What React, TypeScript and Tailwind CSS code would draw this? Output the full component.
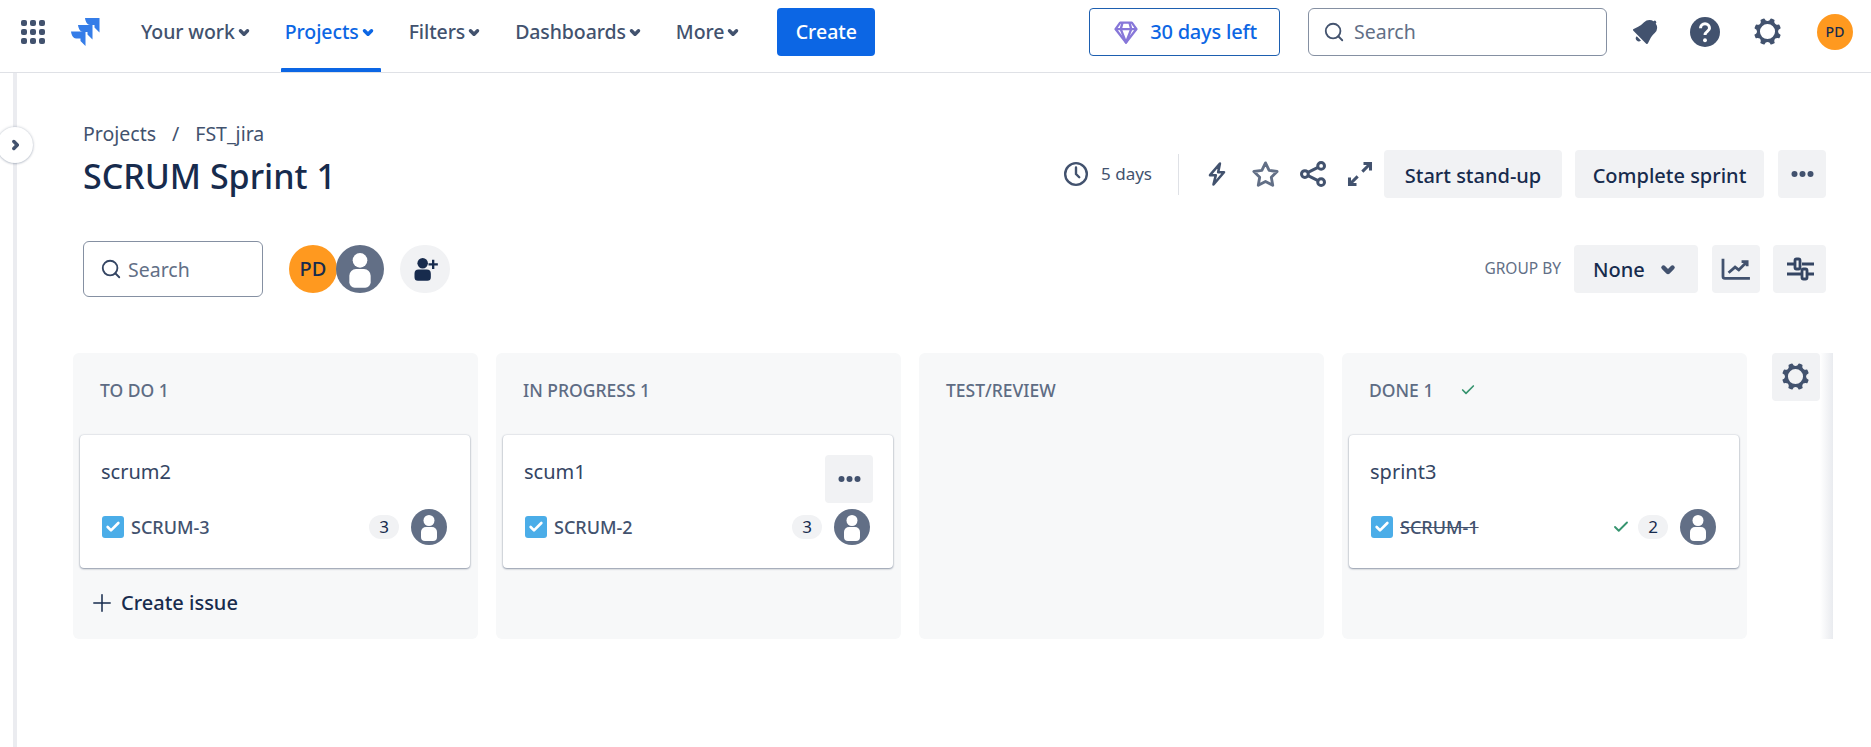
import { Plus, Search, Check } from "lucide-react";

const font = { fontFamily: '"Noto Sans", "Open Sans", sans-serif' };

function Chevron({ className }: { className?: string }) {
  return (
    <svg viewBox="0 0 24 24" className={className} fill="currentColor">
      <path
        stroke="currentColor"
        strokeWidth="1"
        d="M8.292 10.293a1.009 1.009 0 000 1.419l2.939 2.965c.218.215.5.322.779.322s.556-.107.769-.322l2.93-2.955a1.01 1.01 0 000-1.419.987.987 0 00-1.406 0l-2.298 2.317-2.307-2.327a.99.99 0 00-1.406 0z"
      />
    </svg>
  );
}

function Gear({ className }: { className?: string }) {
  return (
    <svg viewBox="0 0 24 24" className={className} fill="currentColor">
      <path
        fillRule="evenodd"
        d="M11.701 16.7a5.002 5.002 0 110-10.003 5.002 5.002 0 010 10.004m8.368-3.117a1.995 1.995 0 01-1.346-1.885c0-.876.563-1.613 1.345-1.885a.48.48 0 00.315-.574 8.947 8.947 0 00-.836-1.993.477.477 0 00-.598-.195 2.04 2.04 0 01-1.29.08 1.988 1.988 0 01-1.404-1.395 2.04 2.04 0 01.076-1.297.478.478 0 00-.196-.597 8.98 8.98 0 00-1.975-.826.479.479 0 00-.574.314 1.995 1.995 0 01-1.885 1.346 1.994 1.994 0 01-1.884-1.345.482.482 0 00-.575-.315c-.708.2-1.379.485-2.004.842a.47.47 0 00-.198.582A2.002 2.002 0 014.445 7.06a.478.478 0 00-.595.196 8.946 8.946 0 00-.833 1.994.48.48 0 00.308.572 1.995 1.995 0 011.323 1.877c0 .867-.552 1.599-1.324 1.877a.479.479 0 00-.308.57 8.99 8.99 0 00.723 1.79.477.477 0 00.624.194c.595-.273 1.343-.264 2.104.238.117.077.225.185.302.3.527.8.512 1.58.198 2.188a.473.473 0 00.168.628 8.946 8.946 0 002.11.897.474.474 0 00.57-.313 1.995 1.995 0 011.886-1.353c.878 0 1.618.567 1.887 1.353a.475.475 0 00.57.313 8.964 8.964 0 002.084-.883.473.473 0 00.167-.631c-.318-.608-.337-1.393.191-2.195.077-.116.185-.225.302-.302.772-.511 1.527-.513 2.125-.23a.477.477 0 00.628-.19 8.925 8.925 0 00.728-1.793.478.478 0 00-.314-.573"
      />
    </svg>
  );
}

function Dots({ className }: { className?: string }) {
  return (
    <svg viewBox="0 0 24 10" className={className} fill="currentColor">
      <circle cx="4" cy="5" r="3" />
      <circle cx="12" cy="5" r="3" />
      <circle cx="20" cy="5" r="3" />
    </svg>
  );
}

function PersonAvatar({ className }: { className?: string }) {
  return (
    <svg viewBox="0 0 36 36" className={className}>
      <circle cx="18" cy="18" r="18" fill="#626f86" />
      <circle cx="18" cy="11.500" r="5.500" fill="#fff" />
      <path d="M10 23a5 5 0 015-5h6a5 5 0 015 5v5a4 4 0 01-4 4h-8a4 4 0 01-4-4z" fill="#fff" />
    </svg>
  );
}

function Logo() {
  return (
    <svg viewBox="0 0 29 29" className="h-[29px] w-[29px]" fill="#357de8">
      <path d="M14 1h14.500v14.500l-5-5V8H19c-2.500 0-4.500-3-5-7z" />
      <path d="M7 8h14.500v14.500l-5-5V15H12c-2.500 0-4.500-3-5-7z" />
      <path d="M0 14.500h14.500V29l-5-5v-2.500H5c-2.500 0-4.500-3-5-7z" />
    </svg>
  );
}

function Grid() {
  return (
    <div className="grid h-6 w-6 grid-cols-3 gap-[3px]">
      {Array.from({ length: 9 }).map((_, i) => (
        <div key={i} className="rounded-[2px] bg-[#42526e]" />
      ))}
    </div>
  );
}

function NavItem({ label, active }: { label: string; active?: boolean }) {
  return (
    <div
      className={
        active
          ? "relative flex h-[72px] items-center px-1 pb-[9px] text-[#0c66e4]"
          : "relative flex h-[72px] items-center px-1 pb-[9px] text-[#42526e]"
      }
    >
      <span className="whitespace-nowrap text-[19.500px] font-medium tracking-[-0.1px]">{label}</span>
      <Chevron className="-mx-[5px] h-7 w-7" />
      {active && <div className="absolute bottom-0 left-0 right-0 h-1 rounded-t-[1px] bg-[#0c66e4]" />}
    </div>
  );
}

function Card({
  title,
  id,
  count,
  done,
  menu,
}: {
  title: string;
  id: string;
  count: number;
  done?: boolean;
  menu?: boolean;
}) {
  return (
    <div className="relative ml-[7px] flex h-[133px] w-[390px] flex-col rounded-[4px] bg-white pl-[21px] pr-[23px] pt-[25px] shadow-[0_1px_2px_#091e4266,0_0_2px_#091e4233]">
      <div className="h-6 text-[20px] leading-6 text-[#344563]">{title}</div>
      <div className="mt-[25px] flex h-9 items-center">
        <div className="ml-[1px] flex h-[22px] w-[22px] items-center justify-center rounded-[3px] bg-[#4bade8]">
          <Check className="h-4 w-4 text-white" strokeWidth={4} />
        </div>
        <span
          className={
            done
              ? "ml-[7px] text-[18px] font-medium text-[#42526e] line-through"
              : "ml-[7px] text-[18px] font-medium text-[#42526e]"
          }
        >
          {id}
        </span>
        {done && <Check className="ml-auto h-[18px] w-[18px] text-[#36946f]" strokeWidth={2.5} />}
        <span
          className={
            done
              ? "ml-[8px] flex h-6 w-[30px] items-center justify-center rounded-full bg-[#f1f2f4] text-[17px] text-[#172b4d]"
              : "ml-auto flex h-6 w-[30px] items-center justify-center rounded-full bg-[#f1f2f4] text-[17px] text-[#172b4d]"
          }
        >
          {count}
        </span>
        <PersonAvatar className="ml-3 h-9 w-9" />
      </div>
      {menu && (
        <div className="absolute right-[20px] top-5 flex h-12 w-12 items-center justify-center rounded-[4px] bg-[#f1f2f4] text-[#42526e]">
          <Dots className="h-[10px] w-[27px]" />
        </div>
      )}
    </div>
  );
}

function Column({
  title,
  doneMark,
  children,
}: {
  title: string;
  doneMark?: boolean;
  children?: React.ReactNode;
}) {
  return (
    <div className="h-[286px] w-[405px] shrink-0 rounded-[6px] bg-[#f7f8f9]">
      <div className="mb-2 flex h-[74px] items-center pl-[27px] text-[17.500px] font-medium text-[#5e6c84]">
        {title}
        {doneMark && <Check className="ml-[27px] h-4 w-4 text-[#36946f]" strokeWidth={2.5} />}
      </div>
      {children}
    </div>
  );
}

export default function App() {
  return (
    <div className="flex h-[747px] w-[1871px] flex-col overflow-hidden bg-white" style={font}>
      {/* TOP NAV */}
      <header className="flex h-[73px] shrink-0 items-center border-b border-[#dfe1e6] pb-[9px] pl-[21px] pr-[18px]">
        <Grid />
        <div className="ml-[26px]">
          <Logo />
        </div>
        <nav className="-mb-[9px] ml-[37px] flex h-[72px] gap-6">
          <NavItem label="Your work" />
          <NavItem label="Projects" active />
          <NavItem label="Filters" />
          <NavItem label="Dashboards" />
          <NavItem label="More" />
        </nav>
        <button className="ml-[31px] h-12 w-[98px] rounded-[4px] bg-[#0c66e4] text-[19.500px] font-medium text-white">
          Create
        </button>

        <div className="ml-auto flex h-12 w-[191px] items-center justify-center gap-[10px] rounded-[4px] border border-[#1d5fb0] text-[20px] font-medium text-[#0c66e4]">
          <svg viewBox="0 0 24 24" className="h-7 w-7" fill="none" stroke="#8777d9" strokeWidth="2" strokeLinejoin="round">
            <path d="M7 4h10l4 5.500L12 21 3 9.500z" />
            <path d="M3 9.500h18M9 4 7.500 9.500 12 21l4.500-11.500L15 4" />
          </svg>
          <span className="whitespace-nowrap tracking-[-0.2px]">30 days left</span>
        </div>
        <div className="ml-7 flex h-12 w-[299px] items-center rounded-[6px] border border-[#8590a2] pl-[14px] text-[19.500px] text-[#626f86]">
          <Search className="h-[22px] w-[22px] text-[#44546f]" strokeWidth={2} />
          <span className="ml-[9px]">Search</span>
        </div>
        <svg viewBox="0 0 24 24" className="ml-[20px] h-9 w-9 text-[#42526e]" fill="currentColor">
          <path d="M6.485 17.669a2 2 0 002.829 0l-2.829-2.83a2 2 0 000 2.83zm4.897-12.191l-.725.725c-.782.782-2.21 1.813-3.206 2.311l-3.017 1.509c-.495.248-.584.774-.187 1.171l8.556 8.556c.398.396.922.313 1.171-.188l1.51-3.016c.494-.988 1.526-2.42 2.311-3.206l.725-.726a5.048 5.048 0 00.64-6.356 1.01 1.01 0 10-1.354-1.494c-.023.025-.046.049-.066.075a5.043 5.043 0 00-2.788-.84 5.036 5.036 0 00-3.57 1.479z" />
        </svg>
        <svg viewBox="0 0 24 24" className="ml-[24px] h-9 w-9 text-[#42526e]">
          <circle cx="12" cy="12" r="10" fill="currentColor" />
          <circle cx="12" cy="17.500" r="1.300" fill="#fff" />
          <path d="M9 9.500a3 3 0 116 0c0 2-3 2.200-3 4.500" fill="none" stroke="#fff" strokeWidth="2" />
        </svg>
        <Gear className="ml-[27px] h-9 w-9 text-[#42526e]" />
        <div className="ml-[31px] flex h-9 w-9 items-center justify-center rounded-full bg-[#ff991f] text-[14px] font-medium text-[#172b4d]">
          PD
        </div>
      </header>

      <div className="relative flex flex-1">
        {/* SIDEBAR STRIP */}
        <div className="ml-[13px] w-1 shrink-0 bg-[#ebecf0]" />
        <div className="absolute -left-[3px] top-[54px] flex h-9 w-9 items-center justify-center rounded-full bg-white text-[#42526e] shadow-[0_0_3px_#091e4240,0_1px_2px_#091e4226]">
          <Chevron className="-rotate-90 h-7 w-7" />
        </div>

        <main className="flex flex-1 flex-col pl-[66px] pr-[45px] pt-[49px]">
          {/* BREADCRUMB */}
          <div className="flex h-6 items-center text-[19.500px] text-[#42526e]">
            <span>Projects</span>
            <span className="mx-[16px]">/</span>
            <span>FST_jira</span>
          </div>

          {/* TITLE ROW */}
          <div className="mt-1 flex h-12 items-center">
            <h1 className="pt-[4px] text-[34px] font-medium text-[#172b4d]">SCRUM Sprint 1</h1>
            <div className="ml-auto flex items-center text-[#42526e]">
              <svg viewBox="0 0 24 24" className="h-[26px] w-[26px]" fill="none" stroke="currentColor" strokeWidth="2.200">
                <circle cx="12" cy="12" r="10" />
                <path d="M12 6v6l3 3" strokeLinecap="round" />
              </svg>
              <span className="ml-[12px] text-[17px]">5 days</span>
              <div className="ml-[26px] h-[41px] w-px bg-[#dfe1e6]" />
              <svg viewBox="0 0 24 24" className="ml-[24px] h-[28px] w-[28px]" fill="none" stroke="currentColor" strokeWidth="2.200" strokeLinejoin="round">
                <path d="M14.500 3 6 13h5l-2 8 9-10.500h-5z" />
              </svg>
              <svg viewBox="0 0 24 24" className="ml-[19px] h-[31px] w-[31px]" fill="none" stroke="#626f86" strokeWidth="2.200" strokeLinejoin="round">
                <path d="m12 3 2.800 5.800 6.200.9-4.500 4.400 1.100 6.300-5.600-3-5.600 3 1.100-6.300L3 9.700l6.200-.9z" />
              </svg>
              <svg viewBox="0 0 24 24" className="ml-[17px] h-[30px] w-[30px]" fill="none" stroke="currentColor" strokeWidth="2.400">
                <circle cx="18.500" cy="5.500" r="2.700" />
                <circle cx="5.500" cy="12" r="2.700" />
                <circle cx="18.500" cy="18.500" r="2.700" />
                <path d="m8 10.700 8-4M8 13.300l8 4" />
              </svg>
              <svg viewBox="0 0 24 24" className="ml-[18px] h-7 w-7" fill="none" stroke="currentColor" strokeWidth="2.600">
                <path d="M14 10 21 3M15 3h6v6M10 14l-7 7M3 15v6h6" />
              </svg>
              <button className="ml-[10px] h-12 w-[178px] whitespace-nowrap rounded-[4px] bg-[#f1f2f4] pt-[4px] text-[20px] font-medium text-[#172b4d]">
                Start stand-up
              </button>
              <button className="ml-[13px] h-12 w-[189px] whitespace-nowrap rounded-[4px] bg-[#f1f2f4] pt-[4px] text-[20px] font-medium text-[#172b4d]">
                Complete sprint
              </button>
              <button className="ml-[14px] flex h-12 w-12 items-center justify-center rounded-[4px] bg-[#f1f2f4] text-[#42526e]">
                <Dots className="h-[10px] w-[27px]" />
              </button>
            </div>
          </div>

          {/* FILTER ROW */}
          <div className="mt-[47px] flex h-12 items-center">
            <div className="flex h-[56px] w-[180px] items-center rounded-[6px] border border-[#8590a2] pl-4 text-[19.500px] text-[#626f86]">
              <Search className="h-[22px] w-[22px] text-[#344563]" strokeWidth={2} />
              <span className="ml-[6px] pt-[2px]">Search</span>
            </div>
            <div className="ml-[26px] flex h-12 w-12 items-center justify-center rounded-full bg-[#ff991f] text-[20px] font-medium text-[#172b4d]">
              PD
            </div>
            <PersonAvatar className="-ml-px h-12 w-12" />
            <div className="ml-4 flex h-12 w-[50px] items-center justify-center rounded-full bg-[#f1f2f4]">
              <svg viewBox="0 0 24 24" className="h-7 w-7" fill="#172b4d">
                <circle cx="10" cy="7" r="4.500" />
                <path d="M3 16a3.500 3.500 0 013.500-3.500h7A3.500 3.500 0 0117 16v3a3 3 0 01-3 3H6a3 3 0 01-3-3z" />
                <path d="M18 4h2v3h3v2h-3v3h-2V9h-3V7h3z" />
              </svg>
            </div>
            <div className="ml-auto flex items-center">
              <span className="text-[15.500px] text-[#626f86]">GROUP BY</span>
              <div className="ml-[13px] flex h-12 w-[124px] items-center rounded-[4px] bg-[#f1f2f4] pl-[19px] text-[20px] font-medium text-[#172b4d]">
                <span className="pt-[2px]">None</span>
                <Chevron className="ml-[5px] h-9 w-9 text-[#42526e]" />
              </div>
              <div className="ml-[14px] flex h-12 w-12 items-center justify-center rounded-[4px] bg-[#f1f2f4] text-[#42526e]">
                <svg viewBox="0 0 32 28" className="h-[26px] w-[32px]" fill="none" stroke="currentColor" strokeWidth="3">
                  <path d="M2 3v19a2 2 0 002 2h27" />
                  <path d="m8 18 7-6 4 3 8-8M22 6h6v5" />
                </svg>
              </div>
              <div className="ml-[13px] flex h-12 w-[53px] items-center justify-center rounded-[4px] bg-[#f1f2f4] text-[#172b4d]">
                <svg viewBox="0 0 28 24" className="h-[24px] w-[28px]" fill="none" stroke="#344563" strokeWidth="2.800">
                  <path d="M1 7h7M16 7h12M1 17h14M22 17h6" />
                  <rect x="9" y="2" width="5" height="10" rx="1.500" />
                  <rect x="16" y="12" width="5" height="10" rx="1.500" />
                </svg>
              </div>
            </div>
          </div>

          {/* BOARD */}
          <div className="-ml-[10px] -mr-[7px] mt-[60px] flex">
            <div className="flex gap-[18px]">
              <Column title="TO DO 1">
                <Card title="scrum2" id="SCRUM-3" count={3} />
                <div className="ml-[15px] mt-[11px] flex h-12 items-center text-[20px] font-medium text-[#172b4d]">
                  <Plus className="h-[28px] w-[28px]" strokeWidth={1.300} />
                  <span className="ml-[5px]">Create issue</span>
                </div>
              </Column>
              <Column title="IN PROGRESS 1">
                <Card title="scum1" id="SCRUM-2" count={3} menu />
              </Column>
              <Column title="TEST/REVIEW" />
              <Column title="DONE 1" doneMark>
                <Card title="sprint3" id="SCRUM-1" count={2} done />
              </Column>
            </div>
            <div className="ml-[25px] flex h-12 w-12 items-center justify-center rounded-[4px] bg-[#f1f2f4] text-[#42526e]">
              <Gear className="h-9 w-9" />
            </div>
            <div className="h-[286px] w-[13px] bg-gradient-to-r from-white to-[#e9ebef]" />
          </div>
        </main>
      </div>
    </div>
  );
}
